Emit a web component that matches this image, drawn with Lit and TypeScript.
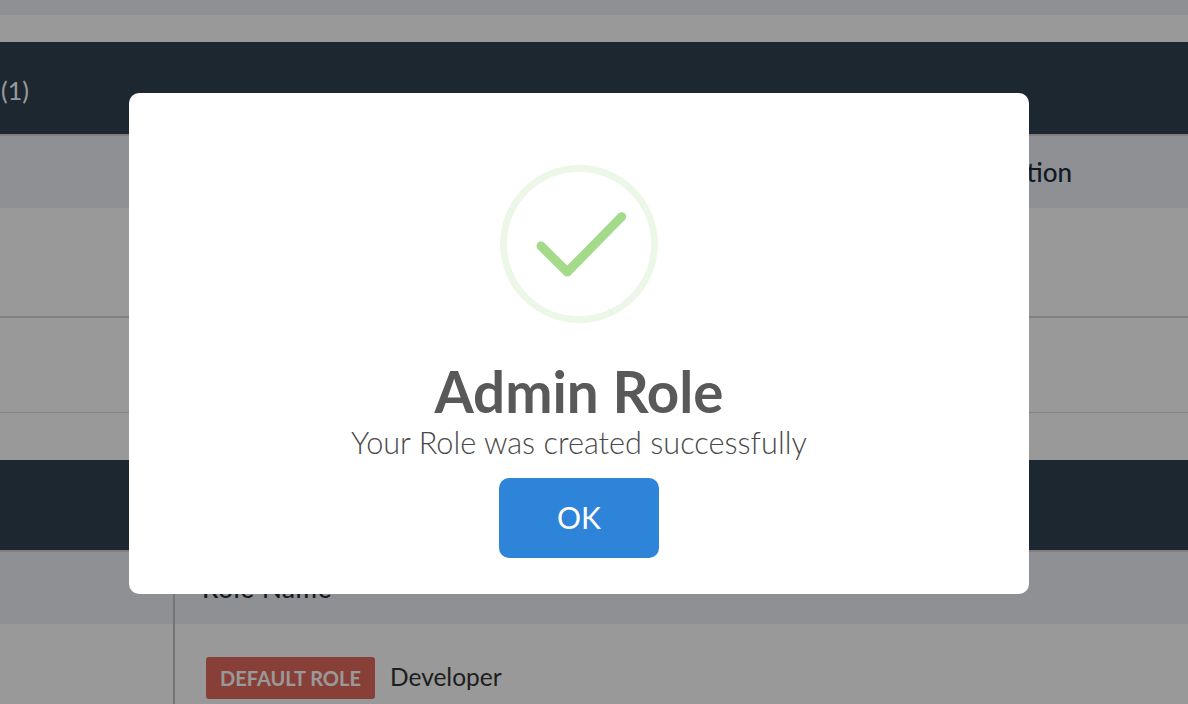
import { LitElement, html, css } from 'lit';
import { customElement } from 'lit/decorators.js';

@customElement('app-root')
export class AppRoot extends LitElement {
  static styles = css`
    :host {
      display: block;
      position: relative;
      width: 1188px;
      height: 704px;
      overflow: hidden;
      background: #fff;
      font-family: Lato, "Open Sans", sans-serif;
    }
    .strip { height: 15px; background: #eef0f6; }
    .gap { height: 27px; }
    .bar {
      display: flex;
      align-items: center;
      box-sizing: border-box;
      height: 92px;
      padding: 3px 0 0 1px;
      background: #2f4150;
      color: #fff;
      font-size: 25px;
    }
    .bar.second { height: 90px; }
    .head {
      display: flex;
      align-items: center;
      justify-content: flex-end;
      height: 72px;
      padding-right: 116px;
      border-top: 2px solid #d4d4d4;
      background: #eef0f6;
      color: #1f2d3d;
      font-size: 26px;
      font-weight: 500;
    }
    .row.a { height: 108px; border-bottom: 2px solid #d8d8d8; }
    .row.b { height: 94px; border-bottom: 1px solid #d8d8d8; }
    .spacer { height: 47px; }
    .split { display: grid; grid-template-columns: 175px 1fr; height: 152px; }
    .split > .left { border-right: 2px solid #c4c4c4; }
    .split .head {
      justify-content: flex-start;
      padding: 0 0 0 27px;
      border-top: 0;
      letter-spacing: 0.6px;
    }
    .left-head { height: 72px; background: #eef0f6; }
    .top-rule { height: 2px; background: #d4d4d4; }
    .role {
      display: flex;
      align-items: center;
      gap: 15px;
      padding: 33px 0 0 31px;
      color: #333;
      font-size: 24.5px;
    }
    .role .name { margin-bottom: 3px; }
    .badge {
      display: flex;
      align-items: center;
      justify-content: center;
      width: 169px;
      height: 42px;
      border-radius: 3px;
      background: #e36a5e;
      color: #fff;
      font-size: 20px;
      font-weight: 700;
    }
    .overlay {
      position: absolute;
      inset: 0;
      display: flex;
      justify-content: center;
      align-items: flex-start;
      padding: 93px 30px 0 0;
      background: rgba(0, 0, 0, 0.4);
    }
    .modal {
      display: flex;
      flex-direction: column;
      align-items: center;
      box-sizing: border-box;
      width: 900px;
      height: 501px;
      padding-top: 72px;
      border-radius: 10px;
      background: #fff;
      color: #595959;
    }
    .icon { display: block; width: 158px; height: 158px; }
    h2 {
      margin: 35px 0 0;
      font-size: 56.5px;
      line-height: 66px;
      font-weight: 700;
    }
    p {
      margin: 0;
      font-size: 30.7px;
      line-height: 38px;
      font-weight: 300;
      color: #4a4a4a;
    }
    button {
      width: 160px;
      height: 80px;
      margin-top: 16px;
      padding: 0 0 2px;
      border: 0;
      border-radius: 10px;
      background: #2d84d8;
      color: #fff;
      font: 400 30px Lato, sans-serif;
    }
  `;

  render() {
    return html`
      <div class="strip"></div>
      <div class="gap"></div>
      <div class="bar">(1)</div>
      <div class="head">Action</div>
      <div class="row a"></div>
      <div class="row b"></div>
      <div class="spacer"></div>
      <div class="bar second"></div>
      <div class="top-rule"></div>
      <div class="split">
        <div class="left"><div class="left-head"></div></div>
        <div>
          <div class="head">Role Name</div>
          <div class="role"><span class="badge">DEFAULT ROLE</span><span class="name">Developer</span></div>
        </div>
      </div>
      <div class="overlay">
        <div class="modal">
          <svg class="icon" viewBox="0 0 158 158" fill="none">
            <circle cx="79" cy="79" r="75.5" stroke="#edf7e8" stroke-width="7" />
            <path d="M9 43l5 4M108 143l4 5" stroke="#d9e6d2" stroke-width="0.6" />
            <path d="M41 81L67.3 107L121.7 51.7" stroke="#a3db8a" stroke-width="9" stroke-linecap="round" stroke-linejoin="round" />
          </svg>
          <h2>Admin Role</h2>
          <p>Your Role was created successfully</p>
          <button>OK</button>
        </div>
      </div>
    `;
  }
}
